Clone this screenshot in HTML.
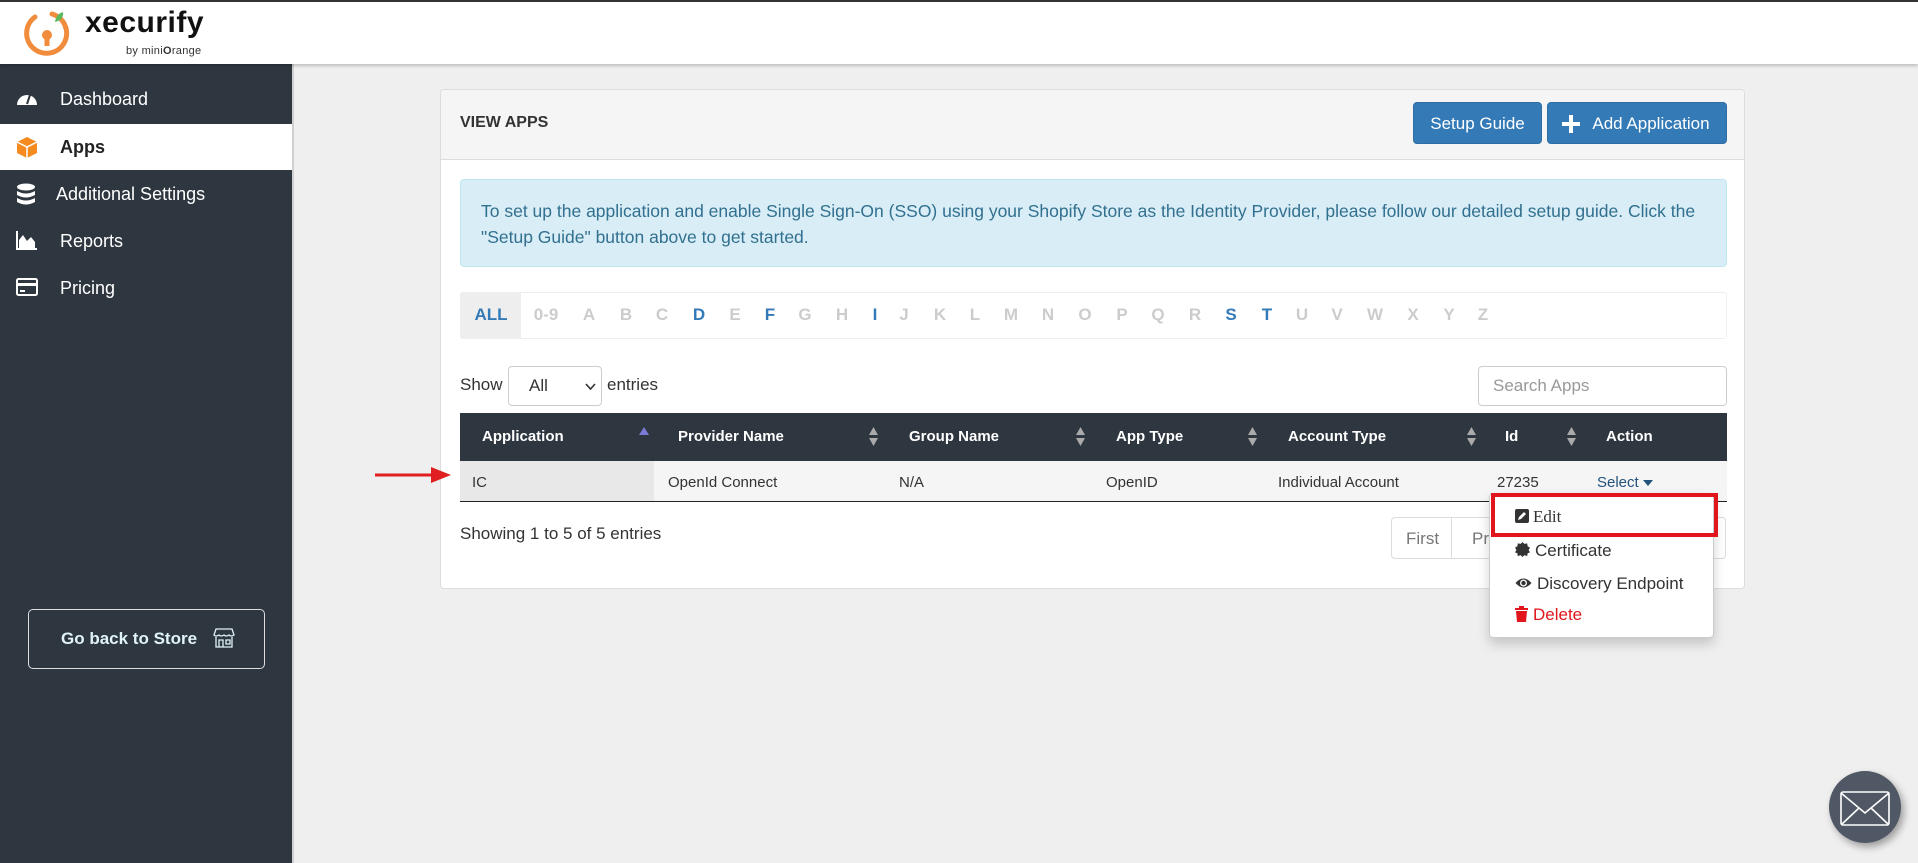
<!DOCTYPE html>
<html><head><meta charset="utf-8"><style>
*{box-sizing:border-box;margin:0;padding:0}
body{width:1918px;height:863px;overflow:hidden;background:#efefef;font-family:"Liberation Sans",Arial,sans-serif;position:relative;color:#333}
.a{position:absolute}
#top{left:0;top:0;width:1918px;height:64px;background:#fff;border-top:2px solid #333;box-shadow:0 2px 3px rgba(0,0,0,.2);z-index:2}
#side{left:0;top:64px;width:294px;height:799px;background:#2e363f;border-right:2px solid #d0d0d0}
.nav{left:0;width:292px;height:46px;color:#fff;font-size:18px;line-height:46px}
.nav span{position:absolute;left:60px}
.nav svg{position:absolute;left:16px;top:12px}
#panel{left:440px;top:89px;width:1305px;height:500px;background:#fff;border:1px solid #ddd;border-radius:4px}
.btn{background:#337ab7;color:#fff;font-size:17px;border-radius:4px;text-align:center;line-height:42px;border:1px solid #2e6da4}
.th{color:#fff;font-weight:bold;font-size:15px;top:428px}
.td{font-size:15px;top:474px;color:#333}
.L{top:305px;font-size:17px;font-weight:bold;color:#ccc;transform:translateX(-50%)}
.L.b{color:#337ab7}
.sort{width:9px;height:20px}
.di{left:1520px;font-size:17px;color:#333}
</style></head><body>
<div id="top" class="a">
<svg class="a" style="left:22px;top:6px" width="50" height="52" viewBox="0 0 50 52"><path d="M30 6 A20 20 0 1 1 13 9" fill="none" stroke="#f08c3c" stroke-width="5" stroke-linecap="round"/><circle cx="25" cy="27" r="5" fill="#f08c3c"/><rect x="22.5" y="28" width="5" height="10" fill="#f08c3c"/><path d="M33 14 Q34 6 41 4 Q42 12 33 14Z" fill="#5cb85c"/></svg>
<div class="a" style="left:85px;top:4px;font-size:30px;font-weight:bold;color:#111;letter-spacing:.5px">xecurify</div>
<div class="a" style="left:126px;top:43px;font-size:11px;color:#333;letter-spacing:.3px">by mini<b>O</b>range</div>
</div>
<div id="side" class="a">
<div class="nav a" style="top:12px"><svg width="22" height="20" viewBox="0 0 22 20"><path d="M1 17 A10 10 0 1 1 21 17Z" fill="#fff"/><path d="M11 16 L14 7" stroke="#2e363f" stroke-width="2"/></svg><span>Dashboard</span></div>
<div class="nav a" style="top:60px;background:#fff;color:#222;font-weight:bold"><svg width="22" height="22" viewBox="0 0 22 22"><path d="M11 1 L21 6 L21 17 L11 22 L1 17 L1 6Z" fill="#f58a1f"/><path d="M1 6 L11 11 L21 6 M11 11 V22" stroke="#fff" stroke-width="1.5" fill="none"/></svg><span>Apps</span></div>
<div class="nav a" style="top:107px"><svg width="20" height="24" viewBox="0 0 20 24"><ellipse cx="10" cy="4" rx="9" ry="3.5" fill="#fff"/><path d="M1 8 Q10 13 19 8 V12 Q10 17 1 12Z M1 15 Q10 20 19 15 V19 Q10 24 1 19Z" fill="#fff"/></svg><span style="left:56px">Additional Settings</span></div>
<div class="nav a" style="top:154px"><svg width="22" height="20" viewBox="0 0 22 20"><path d="M1 1 V19 H21" stroke="#fff" stroke-width="2" fill="none"/><path d="M3 18 L3 10 L7 5 L11 11 L15 7 L19 12 L19 18Z" fill="#fff"/></svg><span>Reports</span></div>
<div class="nav a" style="top:201px"><svg width="22" height="20" viewBox="0 0 22 20"><rect x="1" y="2" width="20" height="16" rx="1.5" fill="none" stroke="#fff" stroke-width="2"/><rect x="1" y="6" width="20" height="3" fill="#fff"/><rect x="4" y="13" width="5" height="2" fill="#fff"/></svg><span>Pricing</span></div>
<div class="a" style="left:28px;top:545px;width:237px;height:60px;border:1px solid #ddd;border-radius:5px;color:#e0f4f8;font-weight:bold;font-size:17px;line-height:58px;padding-left:32px">Go back to Store
<svg class="a" style="left:184px;top:17px" width="22" height="22" viewBox="0 0 22 22" fill="none" stroke="#e0f4f8" stroke-width="1.3"><path d="M3 2 H19 L21 8 Q18 10 16 8 Q13 10 11 8 Q8 10 6 8 Q3 10 1 8Z"/><path d="M3 10 V20 H19 V10 M6 20 V13 H10 V20 M13 13 H17 V17 H13Z"/></svg></div>
</div>
<div id="panel" class="a">
<div class="a" style="left:0;top:0;width:1303px;height:70px;background:#f5f5f5;border-bottom:1px solid #ddd;border-radius:4px 4px 0 0"></div>
<div class="a" style="left:19px;top:24px;font-size:16px;font-weight:bold;color:#333">VIEW APPS</div>
</div>
<div class="a btn" style="left:1413px;top:102px;width:129px;height:42px">Setup Guide</div>
<div class="a btn" style="left:1547px;top:102px;width:180px;height:42px;padding-left:28px">Add Application<svg class="a" style="left:14px;top:12px" width="18" height="18" viewBox="0 0 18 18"><path d="M7 0 H11 V7 H18 V11 H11 V18 H7 V11 H0 V7 H7Z" fill="#fff"/></svg></div>
<div class="a" style="left:460px;top:179px;width:1267px;height:88px;background:#d9edf7;border:1px solid #bce8f1;border-radius:4px;color:#31708f;font-size:17.5px;line-height:26px;padding:18px 20px">To set up the application and enable Single Sign-On (SSO) using your Shopify Store as the Identity Provider, please follow our detailed setup guide. Click the "Setup Guide" button above to get started.</div>
<div class="a" style="left:460px;top:292px;width:1267px;height:47px;border:1px solid #eee;border-radius:3px"></div>
<div class="a" style="left:461px;top:293px;width:60px;height:45px;background:#eee"></div>
<div class="a L b" style="left:491px">ALL</div><div class="a L" style="left:546px">0-9</div>
<div class="a L" style="left:589px">A</div><div class="a L" style="left:626px">B</div><div class="a L" style="left:662px">C</div><div class="a L b" style="left:699px">D</div><div class="a L" style="left:735px">E</div><div class="a L b" style="left:770px">F</div><div class="a L" style="left:805px">G</div><div class="a L" style="left:842px">H</div><div class="a L b" style="left:875px">I</div><div class="a L" style="left:904px">J</div><div class="a L" style="left:940px">K</div><div class="a L" style="left:975px">L</div><div class="a L" style="left:1011px">M</div><div class="a L" style="left:1048px">N</div><div class="a L" style="left:1085px">O</div><div class="a L" style="left:1122px">P</div><div class="a L" style="left:1158px">Q</div><div class="a L" style="left:1195px">R</div><div class="a L b" style="left:1231px">S</div><div class="a L b" style="left:1267px">T</div><div class="a L" style="left:1302px">U</div><div class="a L" style="left:1337px">V</div><div class="a L" style="left:1375px">W</div><div class="a L" style="left:1413px">X</div><div class="a L" style="left:1449px">Y</div><div class="a L" style="left:1483px">Z</div>
<div class="a" style="left:460px;top:375px;font-size:17px">Show</div>
<div class="a" style="left:508px;top:366px;width:94px;height:40px;border:1px solid #ccc;border-radius:4px;font-size:17px;padding:9px 0 0 20px">All<svg class="a" style="left:76px;top:16px" width="11" height="8" viewBox="0 0 11 8"><path d="M1 1 L5.5 6 L10 1" stroke="#333" stroke-width="1.6" fill="none"/></svg></div>
<div class="a" style="left:607px;top:375px;font-size:17px">entries</div>
<div class="a" style="left:1478px;top:366px;width:249px;height:40px;border:1px solid #ccc;border-radius:4px;font-size:17px;color:#999;padding:9px 0 0 14px">Search Apps</div>
<div class="a" style="left:460px;top:413px;width:1267px;height:48px;background:#2e363f"></div>
<div class="a" style="left:460px;top:461px;width:1267px;height:41px;background:#f5f5f5;border-bottom:1px solid #222"></div>
<div class="a" style="left:460px;top:461px;width:194px;height:40px;background:#e8e8e8"></div>
<div class="a th" style="left:482px">Application</div><div class="a th" style="left:678px">Provider Name</div><div class="a th" style="left:909px">Group Name</div><div class="a th" style="left:1116px">App Type</div><div class="a th" style="left:1288px">Account Type</div><div class="a th" style="left:1505px">Id</div><div class="a th" style="left:1606px">Action</div>
<svg class="a" style="left:639px;top:427px" width="10" height="8" viewBox="0 0 10 8"><path d="M5 0 L10 8 H0Z" fill="#7b7bd6"/></svg>
<svg class="a sort" style="left:869px;top:427px" viewBox="0 0 9 20"><path d="M4.5 0 L9 8 H0Z M0 11 H9 L4.5 19Z" fill="#aaa"/></svg>
<svg class="a sort" style="left:1076px;top:427px" viewBox="0 0 9 20"><path d="M4.5 0 L9 8 H0Z M0 11 H9 L4.5 19Z" fill="#aaa"/></svg>
<svg class="a sort" style="left:1248px;top:427px" viewBox="0 0 9 20"><path d="M4.5 0 L9 8 H0Z M0 11 H9 L4.5 19Z" fill="#aaa"/></svg>
<svg class="a sort" style="left:1467px;top:427px" viewBox="0 0 9 20"><path d="M4.5 0 L9 8 H0Z M0 11 H9 L4.5 19Z" fill="#aaa"/></svg>
<svg class="a sort" style="left:1567px;top:427px" viewBox="0 0 9 20"><path d="M4.5 0 L9 8 H0Z M0 11 H9 L4.5 19Z" fill="#aaa"/></svg>
<div class="a td" style="left:472px">IC</div><div class="a td" style="left:668px">OpenId Connect</div><div class="a td" style="left:899px">N/A</div><div class="a td" style="left:1106px">OpenID</div><div class="a td" style="left:1278px">Individual Account</div><div class="a td" style="left:1497px">27235</div><div class="a td" style="left:1597px;color:#23527c">Select</div>
<svg class="a" style="left:1643px;top:480px" width="10" height="6" viewBox="0 0 10 6"><path d="M0 0 H10 L5 6Z" fill="#23527c"/></svg>
<svg class="a" style="left:375px;top:466px" width="76" height="18" viewBox="0 0 76 18"><path d="M0 9 H60" stroke="#e02020" stroke-width="3"/><path d="M56 1 L76 9 L56 17Z" fill="#e02020"/></svg>
<div class="a" style="left:460px;top:524px;font-size:17px">Showing 1 to 5 of 5 entries</div>
<div class="a" style="left:1391px;top:517px;width:335px;height:42px;border:1px solid #ddd;border-radius:4px;font-size:17px;color:#777"><span class="a" style="left:14px;top:11px">First</span><div class="a" style="left:59px;top:0;width:1px;height:40px;background:#ddd"></div><span class="a" style="left:80px;top:11px">Pr</span></div>
<div class="a" style="left:1489px;top:493px;width:225px;height:145px;background:#fff;border:1px solid #ccc;border-radius:4px;box-shadow:0 6px 12px rgba(0,0,0,.18)"></div>
<div class="a" style="left:1491px;top:493px;width:227px;height:44px;border:4px solid #e0161c"></div>
<svg class="a" style="left:1515px;top:509px" width="14" height="14" viewBox="0 0 14 14"><rect width="14" height="14" rx="2" fill="#333"/><path d="M3 11 L4 8 L9 3 L11 5 L6 10Z" fill="#fff"/></svg>
<div class="a di" style="left:1533px;top:507px;font-family:'Liberation Serif',serif">Edit</div>
<svg class="a" style="left:1515px;top:542px" width="15" height="15" viewBox="0 0 16 16"><path d="M8 0 L10 2 L13 1.5 L13.5 4.5 L16 6 L14.5 8.5 L16 11 L13.5 12 L13 15 L10 14 L8 16 L6 14 L3 15 L2.5 12 L0 11 L1.5 8.5 L0 6 L2.5 4.5 L3 1.5 L6 2Z" fill="#333"/></svg>
<div class="a di" style="left:1535px;top:541px">Certificate</div>
<svg class="a" style="left:1515px;top:577px" width="17" height="12" viewBox="0 0 17 12"><path d="M0.5 6 Q8.5 -3 16.5 6 Q8.5 15 0.5 6Z" fill="#333"/><circle cx="8.5" cy="6" r="3.5" fill="#fff"/><circle cx="8.5" cy="6" r="2.2" fill="#333"/></svg>
<div class="a di" style="left:1537px;top:574px">Discovery Endpoint</div>
<svg class="a" style="left:1515px;top:606px" width="13" height="16" viewBox="0 0 13 16"><path d="M0 2 H13 V4 H0Z M4 0 H9 V2 H4Z M1 5 H12 L11 16 H2Z" fill="#e0161c"/></svg>
<div class="a di" style="left:1533px;top:605px;color:#e0161c">Delete</div>
<div class="a" style="left:1829px;top:771px;width:72px;height:72px;border-radius:50%;background:#4f5864;box-shadow:3px 4px 8px rgba(0,0,0,.35)"></div>
<svg class="a" style="left:1840px;top:791px" width="50" height="35" viewBox="0 0 50 35" fill="none" stroke="#fff" stroke-width="1.6"><rect x="1" y="1" width="48" height="33" rx="2"/><path d="M1 2 L25 22 L49 2 M2 33 L19 17 M48 33 L31 17"/></svg>
</body></html>
